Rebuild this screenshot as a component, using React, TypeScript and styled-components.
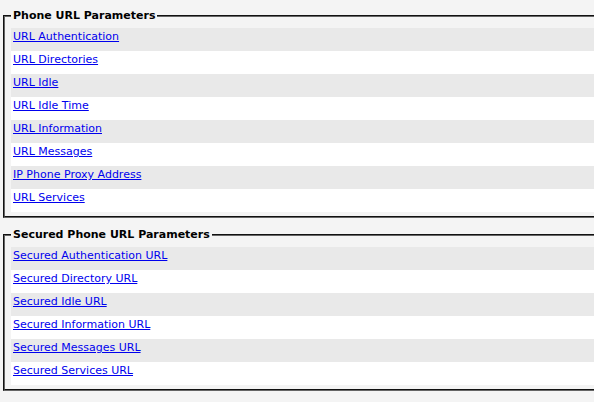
import React from "react";
import styled, { createGlobalStyle } from "styled-components";

const GlobalStyle = createGlobalStyle`
  html, body {
    margin: 0;
    padding: 0;
    background: #f4f4f4;
    overflow: hidden;
  }
  body {
    font-family: "DejaVu Sans", Verdana, sans-serif;
    font-size: 11px;
  }
`;

const Page = styled.div`
  padding: 9px 0 0 3px;
  width: 640px;
`;

const Group = styled.fieldset`
  margin: 0 0 10px 0;
  padding: 6px 0 4px 6px;
  border: 2px groove #666;
  min-width: 0;
`;

const Title = styled.legend`
  padding: 0 2px;
  font-weight: bold;
  font-size: 11px;
  line-height: 13px;
  color: #000;
`;

const Row = styled.div<{ $shaded: boolean }>`
  height: 23px;
  box-sizing: border-box;
  padding: 2px 0 0 2px;
  line-height: 13px;
  background: ${(p) => (p.$shaded ? "#e9e9e9" : "#ffffff")};
`;

const Link = styled.a`
  color: #0000ee;
  text-decoration: underline;
  cursor: pointer;
`;

const groups = [
  {
    title: "Phone URL Parameters",
    items: [
      "URL Authentication",
      "URL Directories",
      "URL Idle",
      "URL Idle Time",
      "URL Information",
      "URL Messages",
      "IP Phone Proxy Address",
      "URL Services",
    ],
  },
  {
    title: "Secured Phone URL Parameters",
    items: [
      "Secured Authentication URL",
      "Secured Directory URL",
      "Secured Idle URL",
      "Secured Information URL",
      "Secured Messages URL",
      "Secured Services URL",
    ],
  },
];

export default function App() {
  return (
    <>
      <GlobalStyle />
      <Page>
        {groups.map((g) => (
          <Group key={g.title}>
            <Title>{g.title}</Title>
            {g.items.map((item, i) => (
              <Row key={item} $shaded={i % 2 === 0}>
                <Link href="#">{item}</Link>
              </Row>
            ))}
          </Group>
        ))}
      </Page>
    </>
  );
}
